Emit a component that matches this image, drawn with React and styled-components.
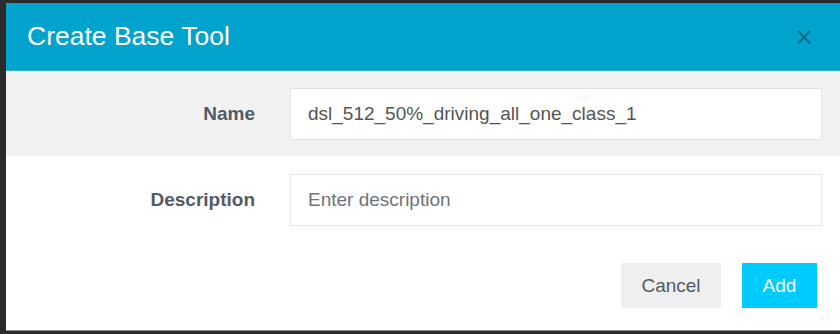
import React from "react";
import styled, { createGlobalStyle } from "styled-components";

const GlobalStyle = createGlobalStyle`
  html, body {
    margin: 0;
    padding: 0;
    background: #2b2b2b;
    overflow: hidden;
    font-family: "Liberation Sans", Arial, sans-serif;
  }
`;

export default function App() {
  return (
    <>
      <GlobalStyle />
      <Modal>
        <Header>
          <Title>Create Base Tool</Title>
          <Close aria-label="close">×</Close>
        </Header>
        <FieldRow shaded>
          <Label>Name</Label>
          <Input defaultValue="dsl_512_50%_driving_all_one_class_1" />
        </FieldRow>
        <FieldRow>
          <Label>Description</Label>
          <Input placeholder="Enter description" />
        </FieldRow>
        <Footer>
          <Button>Cancel</Button>
          <Button primary>Add</Button>
        </Footer>
      </Modal>
    </>
  );
}

const Modal = styled.div`
  margin: 3px 0 0 6px;
  width: 834px;
  height: 327px;
  background: #fff;
  border-bottom: 1px solid #8a8a8a;
  display: flex;
  flex-direction: column;
`;

const Header = styled.div`
  height: 68px;
  background: #02a3cc;
  border-bottom: 1px solid #35b3d4;
  display: flex;
  align-items: center;
  justify-content: space-between;
  padding: 0 26px 0 21px;
  box-sizing: border-box;
`;

const Title = styled.h4`
  margin: 0;
  color: #fff;
  font-size: 26.5px;
  font-weight: 400;
  padding-bottom: 1px;
`;

const Close = styled.button`
  border: 0;
  background: none;
  padding: 0;
  color: rgba(0, 0, 0, 0.35);
  font-family: "DejaVu Sans", sans-serif;
  font-size: 24px;
  line-height: 1;
  cursor: pointer;
`;

const FieldRow = styled.div`
  display: grid;
  grid-template-columns: 249px 532px;
  column-gap: 35px;
  align-items: center;
  padding: ${(p) => (p.shaded ? "17px 0 16px" : "18px 0 18px")};
  background: ${(p) => (p.shaded ? "#f2f2f2" : "#fff")};
`;

const Label = styled.label`
  text-align: right;
  font-size: 19px;
  font-weight: 700;
  color: #545a66;
`;

const Input = styled.input`
  box-sizing: border-box;
  height: 52px;
  width: 100%;
  border: 1px solid #e2e3e9;
  background: #fff;
  padding: 0 17px;
  font-family: "Liberation Sans", Arial, sans-serif;
  font-size: 19px;
  color: #555;
  outline: none;

  &::placeholder {
    color: #70737a;
  }
`;

const Footer = styled.div`
  display: flex;
  justify-content: flex-end;
  gap: 21px;
  padding: 19px 23px 0 0;
`;

const Button = styled.button`
  height: 45px;
  min-width: ${(p) => (p.primary ? "75px" : "100px")};
  border: 0;
  padding: 0 20px;
  background: ${(p) => (p.primary ? "#00cbff" : "#efefef")};
  color: ${(p) => (p.primary ? "#fff" : "#545a66")};
  font-family: "Liberation Sans", Arial, sans-serif;
  font-size: 19px;
  cursor: pointer;
`;
